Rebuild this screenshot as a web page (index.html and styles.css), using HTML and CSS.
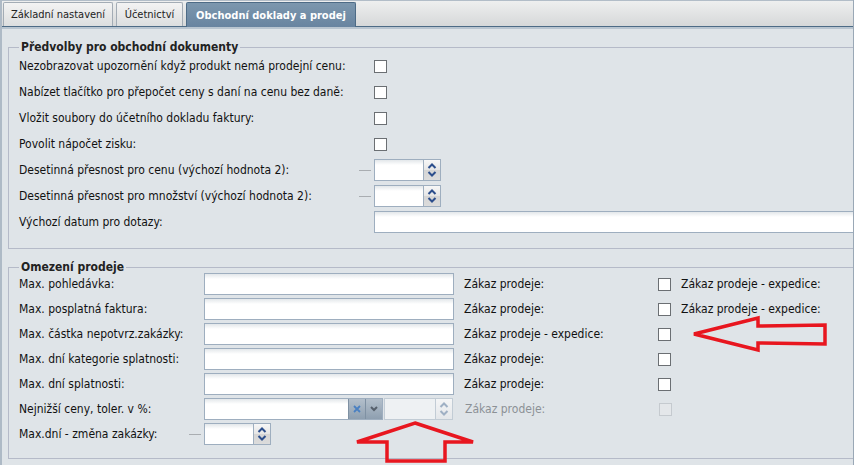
FILE: index.html
```html
<!DOCTYPE html>
<html lang="cs">
<head>
  <meta charset="UTF-8">
  <title>Nastavení</title>
  <link rel="stylesheet" href="styles.css">
</head>
<body>
  <div class="panel">
    <div class="tabbar">
      <div class="tab t1">Základní nastavení</div>
      <div class="tab t2">Účetnictví</div>
      <div class="tab t3 active">Obchodní doklady a prodej</div>
    </div>

    <div class="tabbody">
      <fieldset class="group">
        <legend>Předvolby pro obchodní dokumenty</legend>
        <div class="row"><span class="lbl">Nezobrazovat upozornění když produkt nemá prodejní cenu:</span><span class="check"></span></div>
        <div class="row"><span class="lbl">Nabízet tlačítko pro přepočet ceny s daní na cenu bez daně:</span><span class="check"></span></div>
        <div class="row"><span class="lbl">Vložit soubory do účetního dokladu faktury:</span><span class="check"></span></div>
        <div class="row"><span class="lbl">Povolit nápočet zisku:</span><span class="check"></span></div>
        <div class="row dashed">
          <span class="lbl">Desetinná přesnost pro cenu (výchozí hodnota 2):</span><span class="dash"></span>
          <div class="spinner"><span class="spin-input"></span><span class="spin-btn"><svg width="16" height="20" viewBox="0 0 16 20"><path d="M4.5 8 L8 4.5 L11.5 8" /><path d="M4.5 12 L8 15.5 L11.5 12" /></svg></span></div>
        </div>
        <div class="row dashed">
          <span class="lbl">Desetinná přesnost pro množství (výchozí hodnota 2):</span><span class="dash"></span>
          <div class="spinner"><span class="spin-input"></span><span class="spin-btn"><svg width="16" height="20" viewBox="0 0 16 20"><path d="M4.5 8 L8 4.5 L11.5 8" /><path d="M4.5 12 L8 15.5 L11.5 12" /></svg></span></div>
        </div>
        <div class="row"><span class="lbl">Výchozí datum pro dotazy:</span><span class="input wide"></span></div>
      </fieldset>

      <fieldset class="group limits">
        <legend>Omezení prodeje</legend>
        <div class="row">
          <span class="lbl">Max. pohledávka:</span><span class="input"></span>
          <span class="lbl2">Zákaz prodeje:</span><span class="check"></span>
          <span class="lbl3">Zákaz prodeje - expedice:</span>
        </div>
        <div class="row">
          <span class="lbl">Max. posplatná faktura:</span><span class="input"></span>
          <span class="lbl2">Zákaz prodeje:</span><span class="check"></span>
          <span class="lbl3">Zákaz prodeje - expedice:</span>
        </div>
        <div class="row">
          <span class="lbl">Max. částka nepotvrz.zakázky:</span><span class="input"></span>
          <span class="lbl2">Zákaz prodeje - expedice:</span><span class="check"></span>
        </div>
        <div class="row">
          <span class="lbl">Max. dní kategorie splatnosti:</span><span class="input"></span>
          <span class="lbl2">Zákaz prodeje:</span><span class="check"></span>
        </div>
        <div class="row">
          <span class="lbl">Max. dní splatnosti:</span><span class="input"></span>
          <span class="lbl2">Zákaz prodeje:</span><span class="check"></span>
        </div>
        <div class="row">
          <span class="lbl">Nejnižší ceny, toler. v %:</span>
          <div class="combo-pair">
            <div class="combo">
              <span class="combo-text"></span>
              <span class="trig clear"><svg width="10" height="10" viewBox="0 0 10 10"><path d="M2 2 L8 8 M8 2 L2 8" /></svg></span>
              <span class="trig drop"><svg width="10" height="8" viewBox="0 0 10 8"><path d="M2 2 L5 5 L8 2" /></svg></span>
            </div>
            <div class="spinner disabled"><span class="spin-input"></span><span class="spin-btn"><svg width="16" height="20" viewBox="0 0 16 20"><path d="M4.5 8 L8 4.5 L11.5 8" /><path d="M4.5 12 L8 15.5 L11.5 12" /></svg></span></div>
          </div>
          <span class="lbl2 off">Zákaz prodeje:</span><span class="check off"></span>
        </div>
        <div class="row dashed">
          <span class="lbl">Max.dní - změna zakázky:</span><span class="dash"></span>
          <div class="spinner"><span class="spin-input"></span><span class="spin-btn"><svg width="16" height="20" viewBox="0 0 16 20"><path d="M4.5 8 L8 4.5 L11.5 8" /><path d="M4.5 12 L8 15.5 L11.5 12" /></svg></span></div>
        </div>
      </fieldset>
    </div>

    <!-- ručně dokreslené šipky -->
    <svg class="marks" width="859" height="465" viewBox="0 0 859 465">
      <polygon points="694,334 758,318 758,326 825,325 825,344 758,343 758,350" />
      <polygon points="415,423 473,442 445,442 445,461 387,461 387,442 357,442" />
    </svg>
  </div>
</body>
</html>
```

FILE: styles.css
```css
* {
  margin: 0;
  padding: 0;
  box-sizing: border-box;
}

body {
  font-family: "DejaVu Sans Condensed", "DejaVu Sans", sans-serif;
  font-size: 12px;
  color: #111;
  background: #fff;
}

.panel {
  position: relative;
  width: 854px;
  height: 465px;
  border-left: 2px solid #aebac6;
  border-right: 1px solid #9aa8b6;
  background: #dfe4e8;
  overflow: hidden;
}

.tabbar {
  height: 27px;
  display: flex;
  align-items: flex-end;
  gap: 3px;
  padding-left: 1px;
  background: linear-gradient(#eeefef, #d6d8d9);
  border-top: 1px solid #b2bdc8;
  border-bottom: 1px solid #4d6b86;
}

.tab {
  height: 24px;
  display: flex;
  align-items: center;
  justify-content: center;
  font-size: 11px;
  color: #222;
  border: 1px solid #a3acb5;
  border-bottom: none;
  border-radius: 2px 2px 0 0;
  background: linear-gradient(#f3f3f3, #dcdedf);
}

.t1 { width: 110px; }
.t2 { width: 67px; }
.t3 { width: 170px; }

.tab.active {
  height: 25px;
  margin-bottom: -1px;
  color: #fff;
  font-weight: bold;
  border-color: #4d6b86;
  background: linear-gradient(#7c97ae, #6884a0);
}

.tabbody {
  border-top: 2px solid #b9c5d0;
  padding: 12px 0 0 6px;
}

.group {
  width: 900px;
  border: 1px solid #b5bac8;
  padding: 2px 0 15px 10px;
  display: flex;
  flex-direction: column;
  gap: 4px;
}

.group legend {
  padding: 0 2px;
  font-weight: bold;
  line-height: 12px;
  color: #222;
}

.limits {
  margin-top: 12px;
  padding: 0 0 13px 10px;
  gap: 3px;
}

.row {
  height: 22px;
  display: flex;
  align-items: center;
}

.lbl {
  width: 355px;
  flex: none;
  white-space: nowrap;
}

.limits .lbl {
  width: 185px;
}

.row.dashed .lbl {
  width: 340px;
}

.limits .row.dashed .lbl {
  width: 170px;
}

.dash {
  width: 12px;
  height: 1px;
  margin-right: 3px;
  background: #a9adb1;
}

.check {
  width: 13px;
  height: 13px;
  flex: none;
  border: 1px solid #6b6f73;
  background: #fff;
}

.check.off {
  border-color: #c5cacf;
  background: #e4e7ea;
}

.input {
  width: 250px;
  height: 22px;
  flex: none;
  border: 1px solid #9eaebf;
  background: linear-gradient(#e3e7ea, #fff 5px);
}

.input.wide {
  width: 500px;
}

.lbl2 {
  width: 194px;
  margin-left: 10px;
  flex: none;
  white-space: nowrap;
}

.lbl2.off {
  color: #8c9196;
  margin-left: 11px;
}

.lbl3 {
  margin-left: 10px;
  white-space: nowrap;
}

.spinner {
  display: flex;
  height: 22px;
  flex: none;
}

.spin-input {
  width: 49px;
  border: 1px solid #9eaebf;
  border-right: none;
  background: linear-gradient(#e3e7ea, #fff 5px);
}

.spin-btn {
  width: 18px;
  display: flex;
  align-items: center;
  justify-content: center;
  border: 1px solid #9eaebf;
  background: linear-gradient(#f7f7f7 0, #e6e6e6 48%, #d5d5d5 52%, #dcdcdc 100%);
}

.spin-btn svg path {
  fill: none;
  stroke: #2c4e8c;
  stroke-width: 2;
}

.combo-pair {
  width: 250px;
  display: flex;
  flex: none;
}

.combo {
  width: 179px;
  height: 22px;
  display: flex;
  border: 1px solid #9eaebf;
}

.combo-text {
  flex: 1;
  background: linear-gradient(#e3e7ea, #fff 5px);
}

.trig {
  width: 17px;
  display: flex;
  align-items: center;
  justify-content: center;
  border-left: 1px solid #7f91a3;
  background: linear-gradient(#b3bfcb, #8e9fb0);
}

.trig.clear svg path {
  fill: none;
  stroke: #4a80c2;
  stroke-width: 1.8;
}

.trig.drop svg path {
  fill: none;
  stroke: #56606b;
  stroke-width: 2;
}

.spinner.disabled {
  margin-left: 1px;
}

.spinner.disabled .spin-input {
  width: 51px;
  border-color: #c2ccd5;
  background: #eef1f3;
}

.spinner.disabled .spin-btn {
  border-color: #c2ccd5;
  background: linear-gradient(#f4f5f6, #e4e7ea);
}

.spinner.disabled .spin-btn svg path {
  stroke: #9fb0c4;
}

.marks {
  position: absolute;
  top: 0;
  left: -2px;
  pointer-events: none;
}

.marks polygon {
  fill: none;
  stroke: #e8161f;
  stroke-width: 3.5;
  stroke-linejoin: miter;
}
```
